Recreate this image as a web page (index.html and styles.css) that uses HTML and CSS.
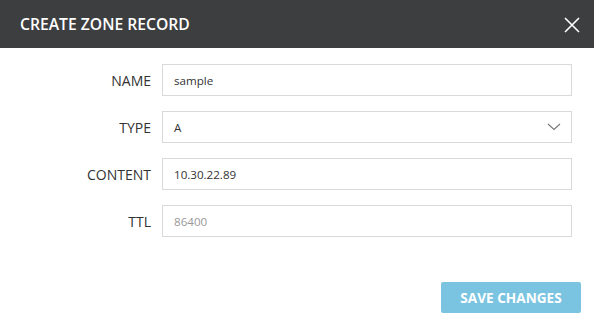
FILE: index.html
```html
<!DOCTYPE html>
<html>
    <head>
        <title>Create Zone Record</title>
        <link rel="stylesheet" href="styles.css">
    </head>
    <body>
        <div class="modal">
            <div class="modal-header">
                <h2 class="modal-title">CREATE ZONE RECORD</h2>
                <button class="close" type="button" aria-label="Close">
                    <svg width="16" height="16" viewBox="0 0 16 16">
                        <path d="M1 1 L15 15 M15 1 L1 15" stroke="#fff" stroke-width="1.6" fill="none"/>
                    </svg>
                </button>
            </div>
            <form class="modal-body">
                <div class="row">
                    <label class="label" for="in_name">NAME</label>
                    <input class="field" type="text" id="in_name" value="sample">
                </div>
                <div class="row">
                    <label class="label" for="in_type">TYPE</label>
                    <div class="field select">
                        <span>A</span>
                        <svg width="14" height="8" viewBox="0 0 14 8">
                            <path d="M1 1 L7 6.5 L13 1" stroke="#777" stroke-width="1.1" fill="none"/>
                        </svg>
                    </div>
                </div>
                <div class="row">
                    <label class="label" for="in_content">CONTENT</label>
                    <input class="field" type="text" id="in_content" value="10.30.22.89">
                </div>
                <div class="row">
                    <label class="label" for="in_ttl">TTL</label>
                    <input class="field" type="text" id="in_ttl" placeholder="86400">
                </div>
            </form>
            <div class="modal-footer">
                <button class="btn-save" type="button">SAVE CHANGES</button>
            </div>
        </div>
    </body>
</html>
```

FILE: styles.css
```css
body {
    margin: 0;
    background-color: #fff;
    font-family: "Open Sans", sans-serif;
}
.modal {
    width: 594px;
    height: 327px;
}
.modal-header {
    height: 48px;
    background-color: #3d3e40;
    display: flex;
    align-items: center;
    justify-content: space-between;
    padding: 0 14px 0 20px;
}
.modal-title {
    margin: 0;
    color: #fff;
    font-size: 15.7px;
    font-weight: 600;
}
.close {
    background: none;
    border: 0;
    padding: 0;
    width: 16px;
    height: 16px;
    display: flex;
    margin-top: 1px;
}
.modal-body {
    display: flex;
    flex-direction: column;
    gap: 15px;
    padding: 16px 22px 0 0;
}
.row {
    display: flex;
    align-items: center;
    gap: 11px;
}
.label {
    width: 151px;
    text-align: right;
    font-size: 14px;
    color: #333;
}
.field {
    box-sizing: border-box;
    width: 410px;
    height: 32px;
    border: 1px solid #d9d9d9;
    border-radius: 0;
    padding: 0 11px;
    font-family: "Open Sans", sans-serif;
    font-size: 11.6px;
    color: #333;
    outline: none;
}
.field::placeholder {
    color: #999;
}
.select {
    display: flex;
    align-items: center;
    justify-content: space-between;
    padding-right: 10px;
}
.modal-footer {
    display: flex;
    justify-content: flex-end;
    padding: 45px 13px 0 0;
}
.btn-save {
    width: 140px;
    height: 31px;
    background-color: #7bc4e1;
    border: 0;
    border-radius: 2px;
    color: #fff;
    font-family: "Open Sans", sans-serif;
    font-size: 13.6px;
    font-weight: 700;
}
```
